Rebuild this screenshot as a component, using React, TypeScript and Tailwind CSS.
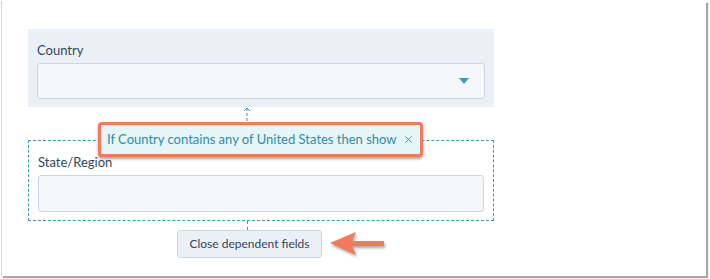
import { X } from "lucide-react";

const font = { fontFamily: "Lato, 'Open Sans', sans-serif" };

function Connector({ arrow }: { arrow?: boolean }) {
  return (
    <svg width="12" height="16" viewBox="0 0 12 16" className="block">
      <line x1="6" y1={arrow ? 1 : 0} x2="6" y2="16" stroke="#3a9bb0" strokeWidth="1" strokeDasharray="3 2" />
      {arrow ? (
        <path d="M3 4 L6 1 L9 4" fill="none" stroke="#3a9bb0" strokeWidth="1" />
      ) : null}
    </svg>
  );
}

export default function App() {
  return (
    <div className="h-[279px] w-[710px] bg-white" style={font}>
      <div className="ml-[1px] mt-[1px] h-[275px] w-[705px] border-l border-[#d4d4d4] bg-white pl-[26px] pt-[28px] shadow-[2px_2px_1px_rgba(0,0,0,0.35)]">
        <div className="w-[466px]">
          <div className="bg-[#eaf0f6] px-[9px] pb-[8px] pt-[11px]">
            <div className="text-[13px] leading-[20px] text-[#33475b]">Country</div>
            <div className="mt-[3px] flex h-[36px] items-center justify-end rounded-[3px] border border-[#cbd6e2] bg-[#f5f8fa] pr-[15px]">
              <svg width="10" height="6" viewBox="0 0 10 6">
                <path d="M0 0 H10 L5 6 Z" fill="#3aa0b8" />
              </svg>
            </div>
          </div>

          <div className="flex h-[33px] justify-center pr-[28px]">
            <Connector arrow />
          </div>

          <div className="relative h-[81px] border border-dashed border-[#3a9bb0] px-[9px] pt-[11px]">
            <div className="absolute -top-[19px] left-[69px] flex h-[35px] w-[325px] items-center justify-between rounded-[4px] border-[3px] border-[#f4785a] bg-[#e5f5f8] pl-[6px] pr-[6px] shadow-[0_2px_3px_rgba(0,0,0,0.35)]">
              <span className="text-[13px] text-[#2c8ea6]">
                If Country contains any of United States then show
              </span>
              <X className="size-[11px] text-[#2c8ea6]" strokeWidth={2} />
            </div>
            <div className="text-[13px] leading-[20px] text-[#33475b]">State/Region</div>
            <div className="mt-[3px] h-[37px] rounded-[3px] border border-[#cbd6e2] bg-[#f5f8fa]" />
          </div>

          <div className="flex h-[9px] justify-center pr-[28px]">
            <div className="h-full border-l border-dashed border-[#3a9bb0]" />
          </div>

          <div className="flex items-center pl-[149px]">
            <button
              type="button"
              className="h-[28px] w-[145px] rounded-[3px] border border-[#cbd6e2] bg-[#eaf0f6] text-[12px] text-[#33475b]"
            >
              Close dependent fields
            </button>
            <svg width="60" height="28" viewBox="0 0 60 28" className="ml-[6px]" style={{ filter: "drop-shadow(1px 2px 1.5px rgba(0,0,0,0.35))" }}>
              <path d="M2 13 L28 2 L24 11 L56 11 L56 16 L24 16 L28 25 Z" fill="#f4785a" />
            </svg>
          </div>
        </div>
      </div>
    </div>
  );
}
